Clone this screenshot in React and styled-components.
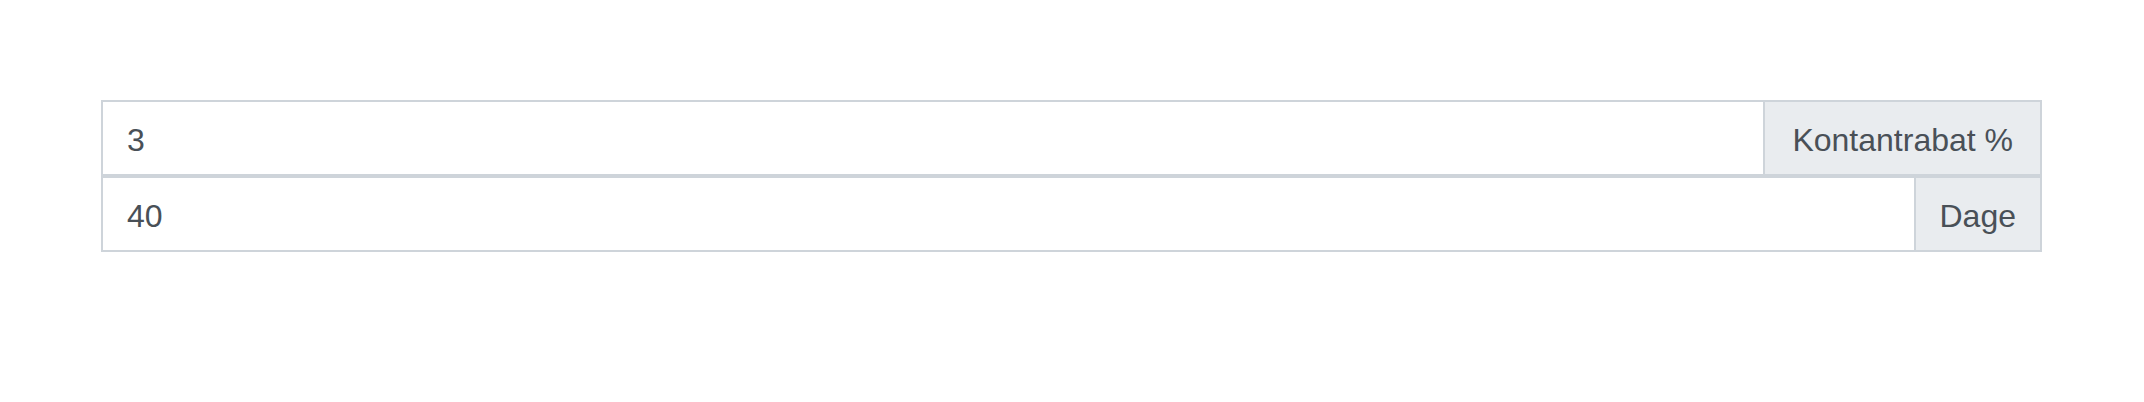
import styled, { createGlobalStyle } from "styled-components";

const GlobalStyle = createGlobalStyle`
  body {
    margin: 0;
    background: #ffffff;
    font-family: "Liberation Sans", Arial, sans-serif;
  }
`;

const Page = styled.div`
  padding: 100px 102px 0 101px;
`;

const Group = styled.div`
  display: flex;
  height: 76px;
  box-sizing: border-box;
  border: 2px solid #ced4da;
`;

const Field = styled.input`
  flex: 1;
  min-width: 0;
  border: 0;
  outline: none;
  padding: 4px 24px 0;
  font-family: inherit;
  font-size: 32px;
  color: #495057;
  background: #ffffff;
`;

const Addon = styled.span`
  display: flex;
  align-items: center;
  padding: 4px ${(p) => p.$pad || 24}px 0;
  border-left: 2px solid #ced4da;
  background: #e9ecef;
  color: #495057;
  font-size: 32px;
  white-space: nowrap;
`;

const rows = [
  { value: "3", label: "Kontantrabat %", pad: 27 },
  { value: "40", label: "Dage" },
];

export default function App() {
  return (
    <Page>
      <GlobalStyle />
      {rows.map((r) => (
        <Group key={r.label}>
          <Field type="text" value={r.value} readOnly />
          <Addon $pad={r.pad}>{r.label}</Addon>
        </Group>
      ))}
    </Page>
  );
}
